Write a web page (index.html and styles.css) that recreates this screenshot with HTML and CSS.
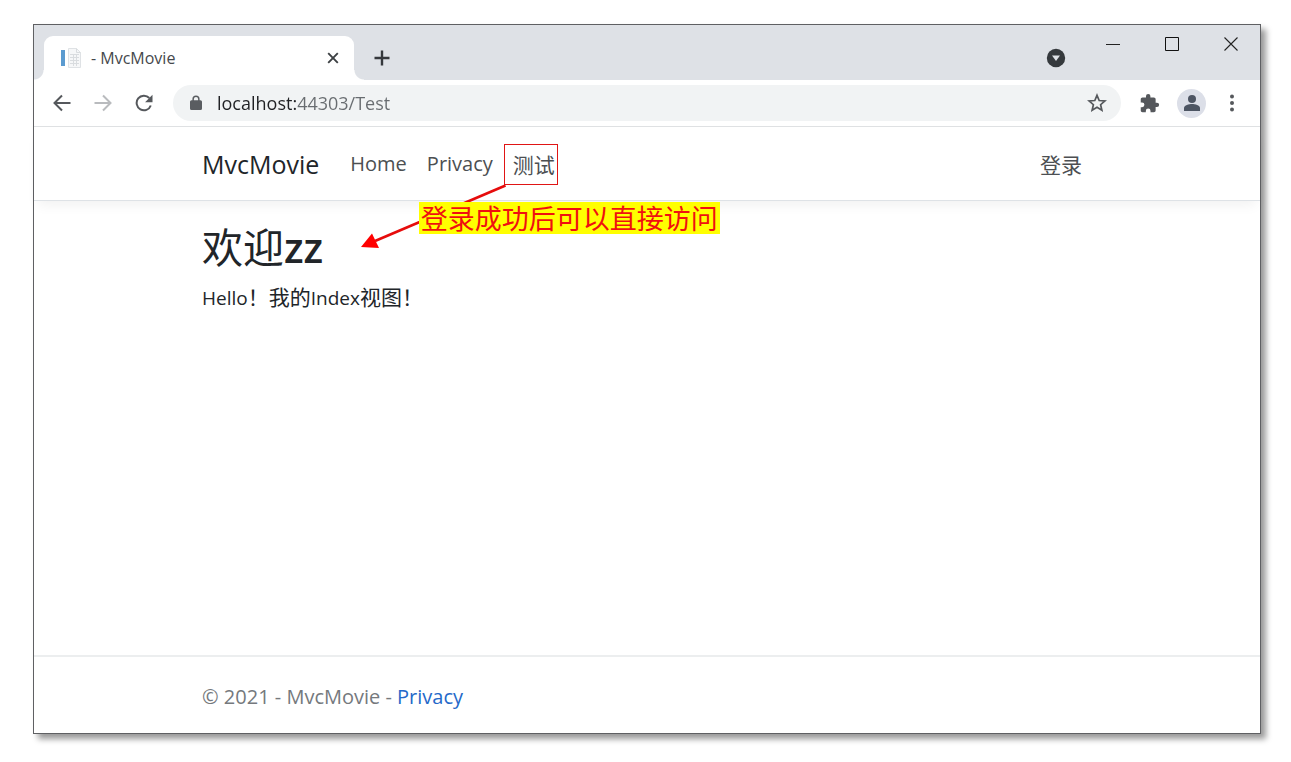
FILE: index.html
```html
<!DOCTYPE html>
<html lang="zh-CN">
<head>
<meta charset="utf-8">
<title>- MvcMovie</title>
<link rel="stylesheet" href="styles.css">
</head>
<body>
<div class="window">
  <div class="titlebar">
    <div class="tab">
      <svg class="favicon" width="20" height="20" viewBox="0 0 20 20" aria-hidden="true">
        <rect x="0" y="2" width="4" height="16" fill="#5b9bd0"/>
        <path d="M7.500 .5h8l4 4v15h-12z" fill="#f6f7f8" stroke="#dfe2e5"/>
        <path d="M15.500 .5v4h4M9 6.500h9M9 9.500h9M9 12.500h9M9 15.500h9M12.500 7v11M15.500 7v11" fill="none" stroke="#d9dcdf"/>
      </svg>
      <span class="tab-title">- MvcMovie</span>
      <button class="plain tab-close" aria-label="关闭标签页"><svg width="12" height="12" viewBox="0 0 12 12"><path d="M1.200 1.200l9.600 9.600M10.800 1.200l-9.600 9.600" fill="none" stroke="#3c4043" stroke-width="1.900"/></svg></button>
    </div>
    <button class="plain new-tab" aria-label="新标签页"><svg width="16" height="16" viewBox="0 0 16 16"><path d="M8 .5v15M.5 8h15" fill="none" stroke="#35383c" stroke-width="2.400"/></svg></button>
    <button class="plain tab-search" aria-label="搜索标签页"><svg width="20" height="20" viewBox="0 0 20 20"><circle cx="10" cy="10" r="9.200" fill="#35393d"/><path d="M6 7.500h8l-4 5.500z" fill="#dee1e6"/></svg></button>
    <div class="caption">
      <button class="plain" aria-label="最小化"><svg width="14" height="14" viewBox="0 0 14 14"><path d="M0 7.500h14" stroke="#222"/></svg></button>
      <button class="plain" aria-label="最大化"><svg width="14" height="14" viewBox="0 0 14 14"><path d="M.5 .5h13v13H.5z" fill="none" stroke="#111"/></svg></button>
      <button class="plain" aria-label="关闭"><svg width="14" height="14" viewBox="0 0 14 14"><path d="M.5 .5l13 13M13.500 .5l-13 13" fill="none" stroke="#222" stroke-width="1.100"/></svg></button>
    </div>
  </div>

  <div class="toolbar">
    <button class="plain" aria-label="后退"><svg width="18" height="18" viewBox="0 0 18 18"><path d="M17.500 9H2M9 1.500L1.500 9 9 16.500" fill="none" stroke="#55585c" stroke-width="2"/></svg></button>
    <button class="plain" aria-label="前进"><svg width="18" height="18" viewBox="0 0 18 18"><path d="M.5 9H16M9 1.500L16.500 9 9 16.500" fill="none" stroke="#b9bbbe" stroke-width="2"/></svg></button>
    <button class="plain" aria-label="重新加载"><svg width="18" height="18" viewBox="0 0 18 18"><path d="M15.800 11.500A7.300 7.300 0 1 1 14.300 4" fill="none" stroke="#55585c" stroke-width="2"/><path d="M17.500 .8v7.400h-7.400z" fill="#55585c"/></svg></button>
    <div class="omnibox">
      <svg class="lock" width="12" height="16" viewBox="0 0 12 16" aria-hidden="true"><path d="M1.500 5.200H2.400V4a3.600 3.600 0 0 1 7.200 0v1.200h.9A1.500 1.500 0 0 1 12 6.700v6.800a1.500 1.500 0 0 1-1.500 1.500h-9A1.500 1.500 0 0 1 0 13.500V6.700a1.500 1.500 0 0 1 1.500-1.500zM3.900 5.200h4.200V4a2.100 2.100 0 0 0-4.200 0z" fill="#5a5d61"/></svg>
      <input class="url" type="text" aria-label="地址" value="localhost:44303/Test">
      <button class="plain" aria-label="收藏"><svg width="20" height="20" viewBox="0 0 20 20"><path d="M10 2.300l2.200 5.200 5.700.5-4.300 3.700 1.300 5.600L10 14.300l-4.900 3 1.300-5.600L2.100 8l5.700-.5z" fill="none" stroke="#55585c" stroke-width="1.700"/></svg></button>
    </div>
    <button class="plain" aria-label="扩展程序"><svg width="21" height="21" viewBox="0 0 24 24"><path d="M20.500 11H19V7c0-1.100-.9-2-2-2h-4V3.500a2.500 2.500 0 0 0-5 0V5H4c-1.100 0-2 .9-2 2v3.800h1.500a2.700 2.700 0 0 1 0 5.400H2V20c0 1.100.9 2 2 2h3.800v-1.500a2.700 2.700 0 0 1 5.400 0V22H17c1.100 0 2-.9 2-2v-4h1.500a2.500 2.500 0 0 0 0-5z" fill="#55585c"/></svg></button>
    <button class="plain profile" aria-label="个人资料"><svg width="18" height="18" viewBox="0 0 18 18"><circle cx="9" cy="5" r="4" fill="#4d5563"/><path d="M1 17v-3c0-2.800 5-4 8-4s8 1.200 8 4v3z" fill="#4d5563"/></svg></button>
    <button class="plain" aria-label="菜单"><svg width="18" height="18" viewBox="0 0 18 18"><g fill="#55585c"><circle cx="9" cy="2.500" r="2"/><circle cx="9" cy="9" r="2"/><circle cx="9" cy="15.500" r="2"/></g></svg></button>
  </div>

  <header class="site-header">
    <nav class="container nav">
      <a class="brand" href="#">MvcMovie</a>
      <a class="nav-link" href="#">Home</a>
      <a class="nav-link" href="#">Privacy</a>
      <div class="marked">
        <a class="nav-link cjk" href="#">测试</a>
        <div class="annotation">
          <svg class="arrow" width="146" height="66" viewBox="0 0 146 66" aria-hidden="true"><path d="M144.500 1.500L14 57" stroke="#e60c0c" stroke-width="2.600"/><path d="M0 63L11 49.500l7 14.500z" fill="#f00"/></svg>
          <span class="note">登录成功后可以直接访问</span>
        </div>
      </div>
      <a class="nav-link cjk login" href="#">登录</a>
    </nav>
  </header>

  <main class="container content">
    <h1 class="welcome">欢迎<span class="user">zz</span></h1>
    <p class="hello">Hello<span class="cjk">！我的</span>Index<span class="cjk">视图！</span></p>
  </main>

  <footer class="site-footer">
    <div class="container">© 2021 - MvcMovie - <a class="footer-link" href="#">Privacy</a></div>
  </footer>
</div>
</body>
</html>
```
FILE: styles.css
```css
* { box-sizing: border-box; }

body {
  margin: 0;
  min-height: 100vh;
  padding: 24px 30px 28px 33px;
  display: flex;
  background: #fff;
  color: #212529;
  font-family: "Open Sans", "Noto Sans CJK SC", sans-serif;
  font-size: 20px;
}

a { text-decoration: none; }

.plain {
  display: inline-flex;
  align-items: center;
  justify-content: center;
  flex: none;
  margin: 0;
  padding: 0;
  border: 0;
  background: none;
}

.window {
  flex: 1;
  display: flex;
  flex-direction: column;
  border: 1px solid #5f6063;
  background: #fff;
  box-shadow: 5px 5px 6px rgba(0, 0, 0, .4);
}

/* Browser frame */
.titlebar {
  display: flex;
  align-items: center;
  height: 55px;
  padding: 11px 22px 0 10px;
  background: #dee1e6;
}

.tab {
  position: relative;
  display: flex;
  align-items: center;
  width: 310px;
  height: 44px;
  padding: 0 15px 0 17px;
  border-radius: 9px 9px 0 0;
  background: #fff;
}

.tab::before,
.tab::after {
  content: "";
  position: absolute;
  bottom: 0;
  width: 10px;
  height: 10px;
}

.tab::before {
  right: 100%;
  background: radial-gradient(circle at 0 0, transparent 9px, #fff 10px);
}

.tab::after {
  left: 100%;
  background: radial-gradient(circle at 100% 0, transparent 9px, #fff 10px);
}

.tab-title {
  flex: 1;
  margin-left: 10px;
  color: #45484c;
  font-size: 16px;
}

.new-tab { margin-left: 20px; }

.tab-search { margin: 0 40px 0 auto; }

.caption {
  display: flex;
  align-self: flex-start;
  gap: 45px;
  margin-top: 1px;
}

.toolbar {
  display: flex;
  align-items: center;
  gap: 23px;
  height: 47px;
  padding: 0 19px;
  border-bottom: 1px solid #dfe1e3;
}

.omnibox {
  flex: 1;
  display: flex;
  align-items: center;
  height: 36px;
  margin: 0 -5px 0 -3px;
  padding: 0 14px 0 17px;
  border-radius: 18px;
  background: #f1f3f4;
}

.url {
  flex: 1;
  margin: 0 0 0 15px;
  padding: 0;
  border: 0;
  outline: 0;
  color: #202124;
  font: inherit;
  font-size: 18px;
  background: linear-gradient(90deg, #202124 80px, #686c70 80px);
  background-clip: text;
  -webkit-background-clip: text;
  -webkit-text-fill-color: transparent;
}

.profile {
  width: 29px;
  height: 29px;
  margin: 0 -6px;
  border-radius: 50%;
  background: #dcdfe8;
}

/* Page */
.container {
  width: 100%;
  max-width: 890px;
  margin: 0 auto;
}

.cjk {
  font-family: "Noto Sans CJK SC", sans-serif;
  font-size: 21px;
}

.site-header {
  border-bottom: 1px solid #dee2e6;
  box-shadow: 0 8px 12px -4px rgba(0, 0, 0, .06);
}

.nav {
  display: flex;
  align-items: center;
  height: 73px;
}

.brand {
  margin-right: 21px;
  color: #212529;
  font-size: 25px;
}

.nav-link {
  padding: 0 10px;
  color: #4c4f52;
  line-height: 40px;
}

.marked { position: relative; }

.marked::before {
  content: "";
  position: absolute;
  inset: 0 7px -1px 1px;
  border: 1px solid #e01515;
  pointer-events: none;
}

.login { margin-left: auto; }

.annotation {
  position: absolute;
  z-index: 1;
  top: 40px;
  left: -142px;
}

.arrow { display: block; }

.note {
  position: absolute;
  top: 18px;
  left: 58px;
  padding: 0 2px;
  background: #ff0;
  color: #f01010;
  font-family: "Noto Sans CJK SC", sans-serif;
  font-size: 27px;
  line-height: 32px;
  white-space: nowrap;
}

.content {
  flex: 1;
  padding-top: 17px;
}

.welcome {
  margin: 0 0 6px;
  font-family: "Noto Sans CJK SC", sans-serif;
  font-size: 41px;
  font-weight: 400;
  line-height: 54px;
}

.user {
  font-family: "Open Sans", sans-serif;
  font-weight: 600;
}

.hello {
  margin: 0;
  font-size: 19px;
  line-height: 32px;
}

.site-footer {
  padding-top: 3px;
  border-top: 2px solid #eceeef;
  color: #75797d;
  line-height: 73px;
}

.footer-link { color: #2469c9; }
```
